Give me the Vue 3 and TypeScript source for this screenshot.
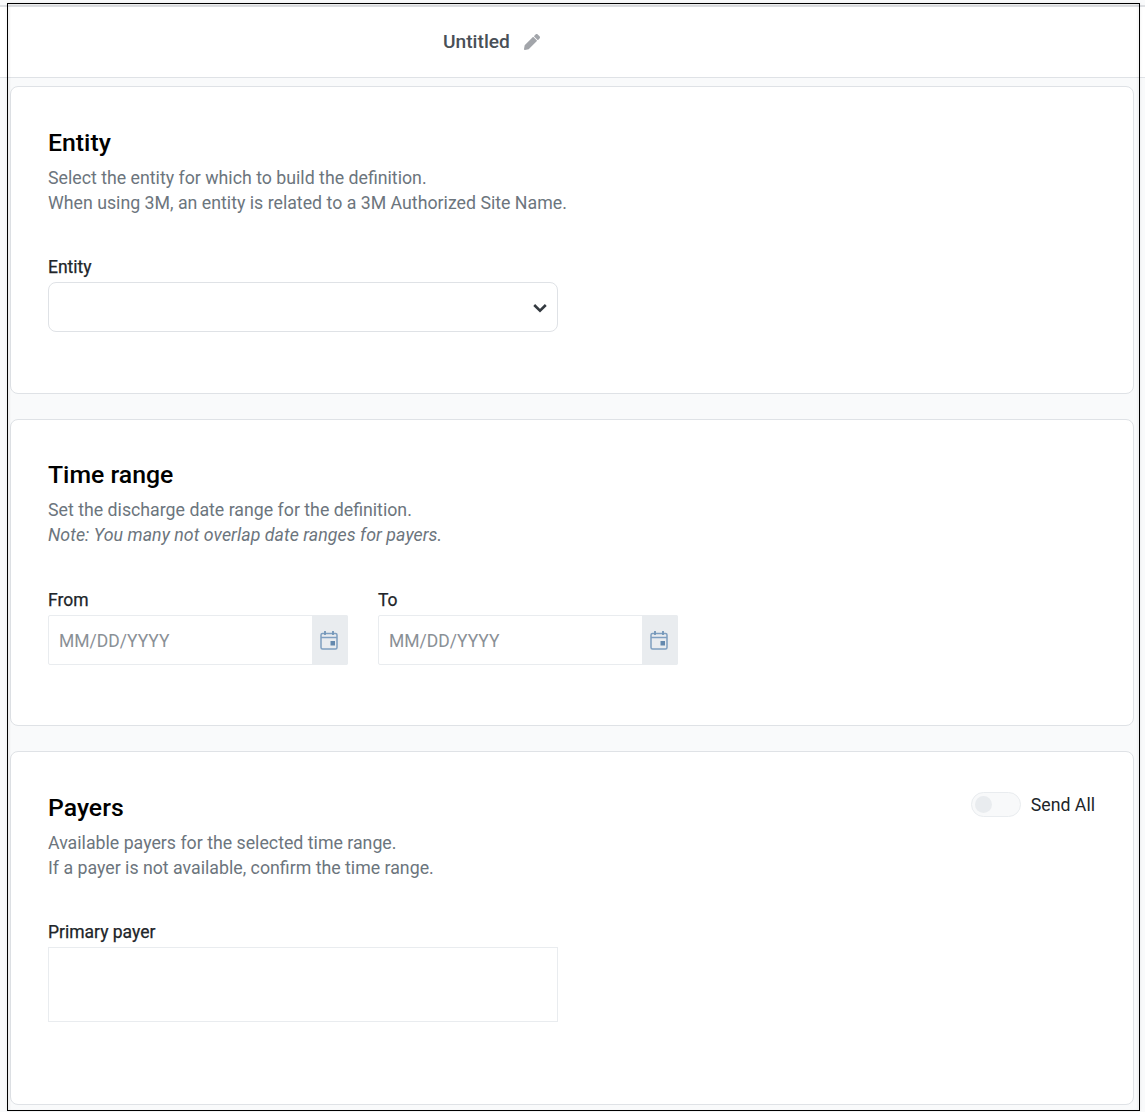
<script setup lang="ts">
const placeholder = 'MM/DD/YYYY'
const dateFields = ['From', 'To']
</script>

<template>
  <div class="page">
    <header class="header">
      <span class="title">Untitled</span>
      <svg class="pencil" viewBox="0 0 512 512" width="16" height="16" aria-hidden="true">
        <path fill="#a2a5aa" d="M497.9 142.1l-46.1 46.1c-4.7 4.7-12.3 4.7-17 0l-111-111c-4.7-4.7-4.7-12.3 0-17l46.1-46.1c18.7-18.7 49.1-18.7 67.9 0l60.1 60.1c18.8 18.7 18.8 49.1 0 67.9zM284.2 99.8L21.6 362.4.4 483.9c-2.9 16.4 11.4 30.6 27.8 27.8l121.5-21.3 262.6-262.6c4.7-4.7 4.7-12.3 0-17l-111-111c-4.8-4.7-12.4-4.7-17.1 0z"/>
      </svg>
    </header>

    <main class="cards">
      <section class="card card-entity">
        <h2>Entity</h2>
        <p class="desc">Select the entity for which to build the definition.<br>When using 3M, an entity is related to a 3M Authorized Site Name.</p>
        <label class="field-label">Entity</label>
        <div class="select">
          <svg viewBox="0 0 14 10" width="14" height="10" aria-hidden="true">
            <path d="M1.2 2 7 7.6 12.8 2" fill="none" stroke="#343a40" stroke-width="2.6"/>
          </svg>
        </div>
      </section>

      <section class="card card-time">
        <h2>Time range</h2>
        <p class="desc">Set the discharge date range for the definition.<br><em>Note: You many not overlap date ranges for payers.</em></p>
        <div class="dates">
          <div v-for="name in dateFields" :key="name" class="date-field">
            <label class="field-label">{{ name }}</label>
            <div class="date-input">
              <span class="placeholder">{{ placeholder }}</span>
              <span class="date-btn">
                <svg viewBox="0 0 18 20" width="18" height="20" aria-hidden="true">
                  <rect x="1" y="3.5" width="16" height="15.5" rx="1.5" fill="none" stroke="#7f9fc0" stroke-width="1.5"/>
                  <path d="M1 7.5h16" stroke="#7f9fc0" stroke-width="1.5"/>
                  <path d="M5 1v4M13 1v4" stroke="#7396b8" stroke-width="1.8"/>
                  <rect x="10.5" y="11" width="4.5" height="4.5" fill="#6489ae"/>
                </svg>
              </span>
            </div>
          </div>
        </div>
      </section>

      <section class="card card-payers">
        <div class="toggle-row">
          <span class="toggle"><span class="knob"></span></span>
          <span class="toggle-label">Send All</span>
        </div>
        <h2>Payers</h2>
        <p class="desc">Available payers for the selected time range.<br>If a payer is not available, confirm the time range.</p>
        <label class="field-label">Primary payer</label>
        <div class="listbox"></div>
      </section>
    </main>

    <div class="frame"></div>
  </div>
</template>

<style scoped>
.page {
  position: relative;
  height: 1112px;
  overflow: hidden;
  box-sizing: border-box;
  padding-top: 5px;
  background: #f9fafb;
  font-family: Roboto, "Liberation Sans", sans-serif;
  color: #212529;
}
.header {
  box-sizing: border-box;
  height: 73px;
  display: flex;
  align-items: center;
  padding: 0 0 1px 443px;
  background: #fff;
  border-top: 2px solid #dee0e3;
  border-bottom: 1px solid #dfe2e6;
}
.title {
  font-size: 19.2px;
  font-weight: 500;
  color: #495057;
}
.pencil {
  margin-left: 14px;
}
.cards {
  display: flex;
  flex-direction: column;
  gap: 25px;
  padding: 8px 11px 0 10px;
}
.card {
  position: relative;
  box-sizing: border-box;
  padding: 40px 37px 0;
  background: #fff;
  border: 1px solid #dfe2e6;
  border-radius: 8px;
}
.card-entity { height: 308px; }
.card-time { height: 307px; padding-top: 39px; }
.card-payers { height: 354px; }
h2 {
  margin: 0;
  font-size: 24.8px;
  line-height: 32px;
  font-weight: 500;
  color: #000;
}
.desc {
  margin: 7px 0 0;
  font-size: 17.75px;
  line-height: 25px;
  color: #6c757d;
}
.desc em {
  letter-spacing: 0.06px;
}
.field-label {
  display: block;
  margin-top: 39px;
  font-size: 17.5px;
  line-height: 24px;
  font-weight: 400;
  -webkit-text-stroke: 0.25px #212529;
  color: #212529;
}
.select {
  box-sizing: border-box;
  width: 510px;
  height: 50px;
  margin-top: 3px;
  padding: 2px 10px 0 0;
  display: flex;
  align-items: center;
  justify-content: flex-end;
  border: 1px solid #dfe2e6;
  border-radius: 8px;
}
.dates {
  display: flex;
  gap: 30px;
  margin-top: 1px;
}
.date-field {
  width: 300px;
}
.date-input {
  box-sizing: border-box;
  height: 50px;
  margin-top: 3px;
  display: flex;
  align-items: stretch;
  border: 1px solid #e9ecef;
  border-radius: 2px;
}
.placeholder {
  flex: 1;
  padding-left: 10px;
  font-size: 17.5px;
  line-height: 50px;
  color: #8a9096;
}
.date-btn {
  width: 36px;
  margin: -1px;
  padding-right: 2px;
  box-sizing: border-box;
  display: flex;
  align-items: center;
  justify-content: center;
  background: #e9ecef;
  border-radius: 0 2px 2px 0;
}
.toggle-row {
  position: absolute;
  top: 40px;
  right: 38px;
  display: flex;
  align-items: center;
  gap: 10px;
}
.toggle {
  box-sizing: border-box;
  width: 50px;
  height: 25px;
  padding: 3px;
  background: #f8f9fa;
  border: 1px solid #e9ecef;
  border-radius: 13px;
}
.knob {
  display: block;
  width: 17px;
  height: 17px;
  background: #e9ecef;
  border-radius: 50%;
}
.toggle-label {
  font-size: 17.7px;
  color: #212529;
}
.listbox {
  box-sizing: border-box;
  width: 510px;
  height: 75px;
  margin-top: 3px;
  border: 1px solid #e9ecef;
}
.frame {
  position: absolute;
  left: 7px;
  top: 3px;
  width: 1133px;
  height: 1108px;
  box-sizing: border-box;
  border: 1px solid #000;
  box-shadow: inset 2px 2px 2px rgba(0, 0, 0, 0.05), inset -2px 0 2px rgba(0, 0, 0, 0.04), 0 0 3px rgba(0, 0, 0, 0.08);
  pointer-events: none;
}
</style>

<style>
html, body { background: #fff; }
</style>
